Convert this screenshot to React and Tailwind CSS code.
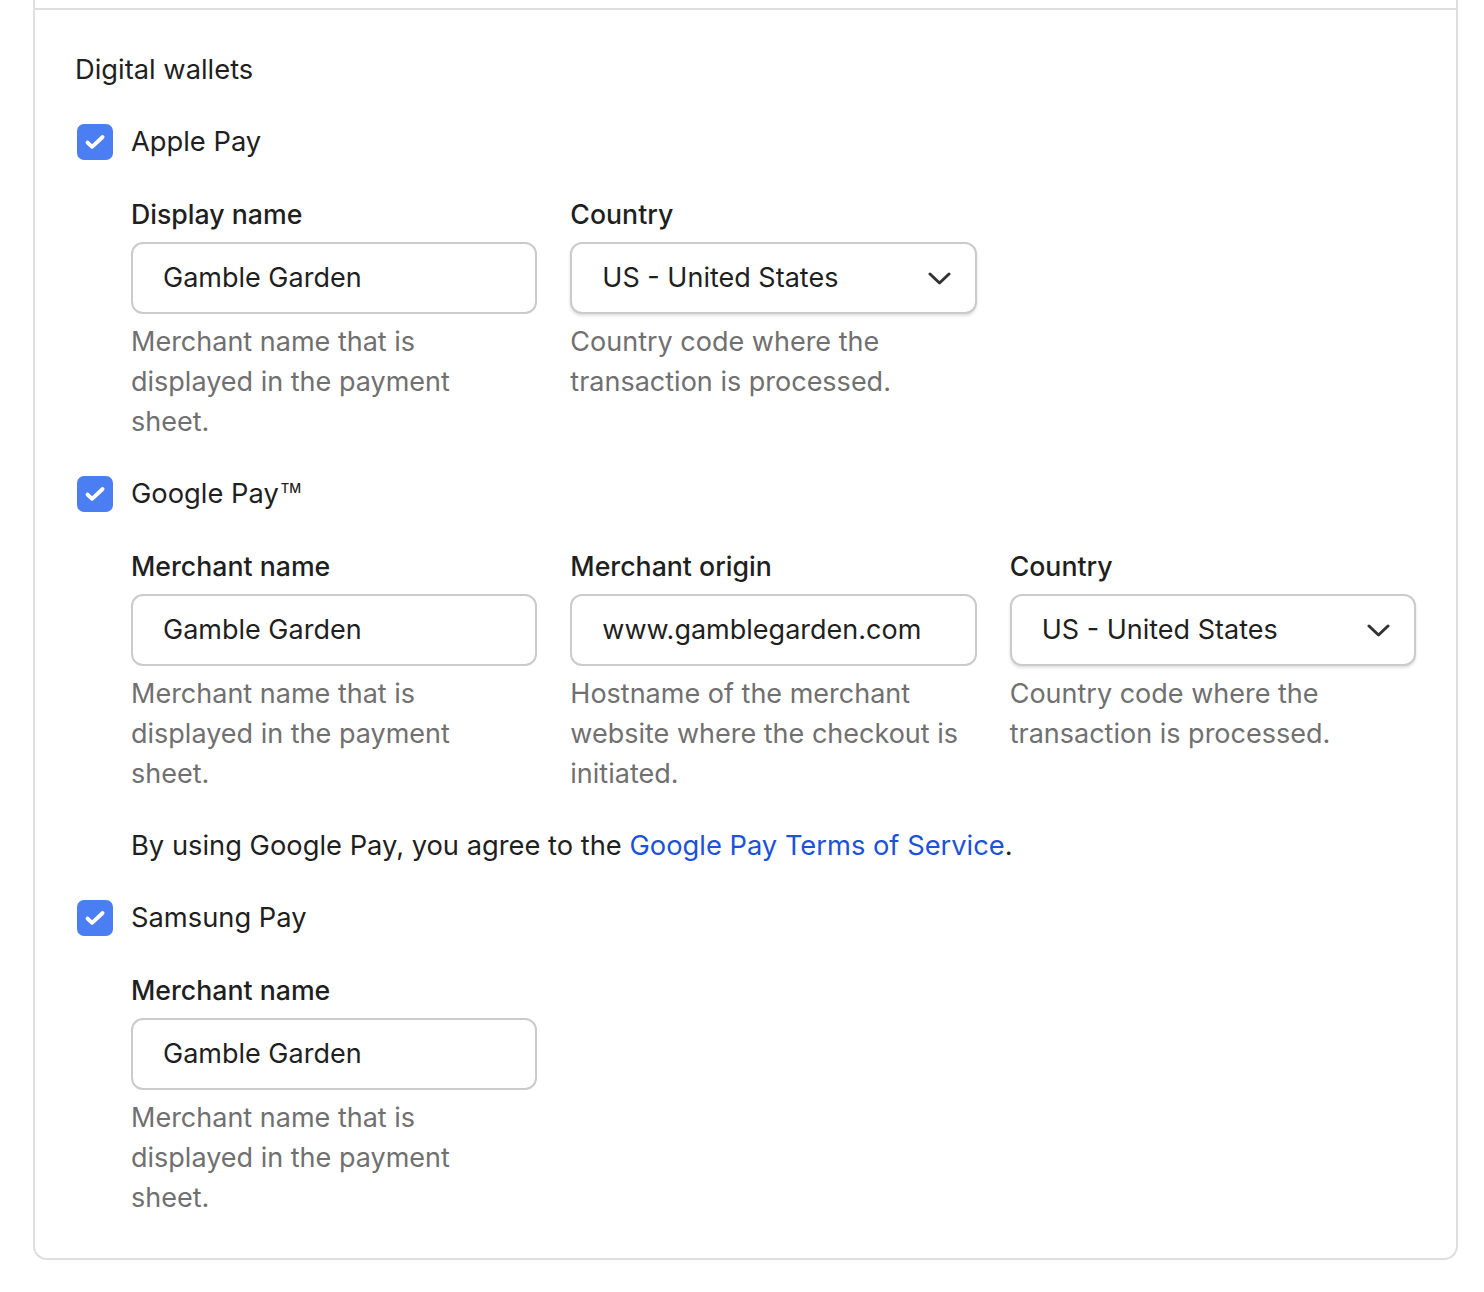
import React from 'react'

const font = { fontFamily: 'Inter, "Liberation Sans", sans-serif' }

function Checkbox({ label, tm }) {
  return (
    <div className="flex items-center h-[40px]">
      <span className="ml-[2px] w-[36px] h-[36px] rounded-[7px] bg-[#4c7ef3] flex">
        <svg width="36" height="36" viewBox="0 0 36 36" fill="none">
          <path d="M10.5 18.5l4.6 4.3L25.6 13" stroke="white" strokeWidth="3.8" strokeLinecap="round" strokeLinejoin="round" />
        </svg>
      </span>
      <span className="ml-[18px] text-[27.3px] text-[#1f1f1f]">
        {label}
        {tm && <span className="ml-[2px] text-[13px] font-medium align-[10px]">TM</span>}
      </span>
    </div>
  )
}

function Field({ label, value, help, select }) {
  return (
    <div className="flex flex-col">
      <div className="h-[40px] leading-[40px] text-[26.7px] font-medium text-[#1f1f1f]">{label}</div>
      <div
        className={
          'mt-[8px] h-[72px] rounded-[12px] border-2 border-[#cbcbcb] bg-white flex items-center pl-[30px] pr-[24px] text-[27px] text-[#1f1f1f] ' +
          (select ? 'shadow-[0_2px_3px_rgba(0,0,0,0.12)]' : '')
        }
      >
        <span className="flex-1">{value}</span>
        {select && (
          <svg width="23" height="13" viewBox="0 0 23 13" fill="none">
            <path d="M2 2l9.5 9L21 2" stroke="#333" strokeWidth="3" strokeLinecap="round" strokeLinejoin="round" />
          </svg>
        )}
      </div>
      <p className="mt-[8px] text-[27px] leading-[40px] text-[#707070] pr-[12px]">{help}</p>
    </div>
  )
}

const merchantHelp = 'Merchant name that is displayed in the payment sheet.'
const countryHelp = 'Country code where the transaction is processed.'

export default function App() {
  return (
    <div className="min-h-[1292px] bg-white" style={font}>
      <div className="ml-[33px] w-[1425px] border-x-2 border-b-2 border-[#dedede] rounded-b-[14px] pt-[8px]">
        <div className="border-t-2 border-[#dedede] px-[40px] pt-[40px] pb-[40px] flex flex-col gap-[32px]">
          <div className="h-[40px] leading-[40px] text-[27.3px] text-[#1f1f1f]">Digital wallets</div>

          <Checkbox label="Apple Pay" />
          <div className="ml-[56px] grid grid-cols-3 gap-x-[33px]">
            <Field label="Display name" value="Gamble Garden" help={merchantHelp} />
            <Field label="Country" value="US - United States" help={countryHelp} select />
          </div>

          <Checkbox label="Google Pay" tm />
          <div className="ml-[56px] grid grid-cols-3 gap-x-[33px]">
            <Field label="Merchant name" value="Gamble Garden" help={merchantHelp} />
            <Field label="Merchant origin" value="www.gamblegarden.com" help="Hostname of the merchant website where the checkout is initiated." />
            <Field label="Country" value="US - United States" help={countryHelp} select />
          </div>
          <div className="ml-[56px] h-[40px] leading-[40px] text-[27.3px] text-[#1f1f1f]">
            By using Google Pay, you agree to the{' '}
            <a className="text-[#1d52d8]">Google Pay Terms of Service</a>.
          </div>

          <Checkbox label="Samsung Pay" />
          <div className="ml-[56px] grid grid-cols-3 gap-x-[33px]">
            <Field label="Merchant name" value="Gamble Garden" help={merchantHelp} />
          </div>
        </div>
      </div>
    </div>
  )
}
